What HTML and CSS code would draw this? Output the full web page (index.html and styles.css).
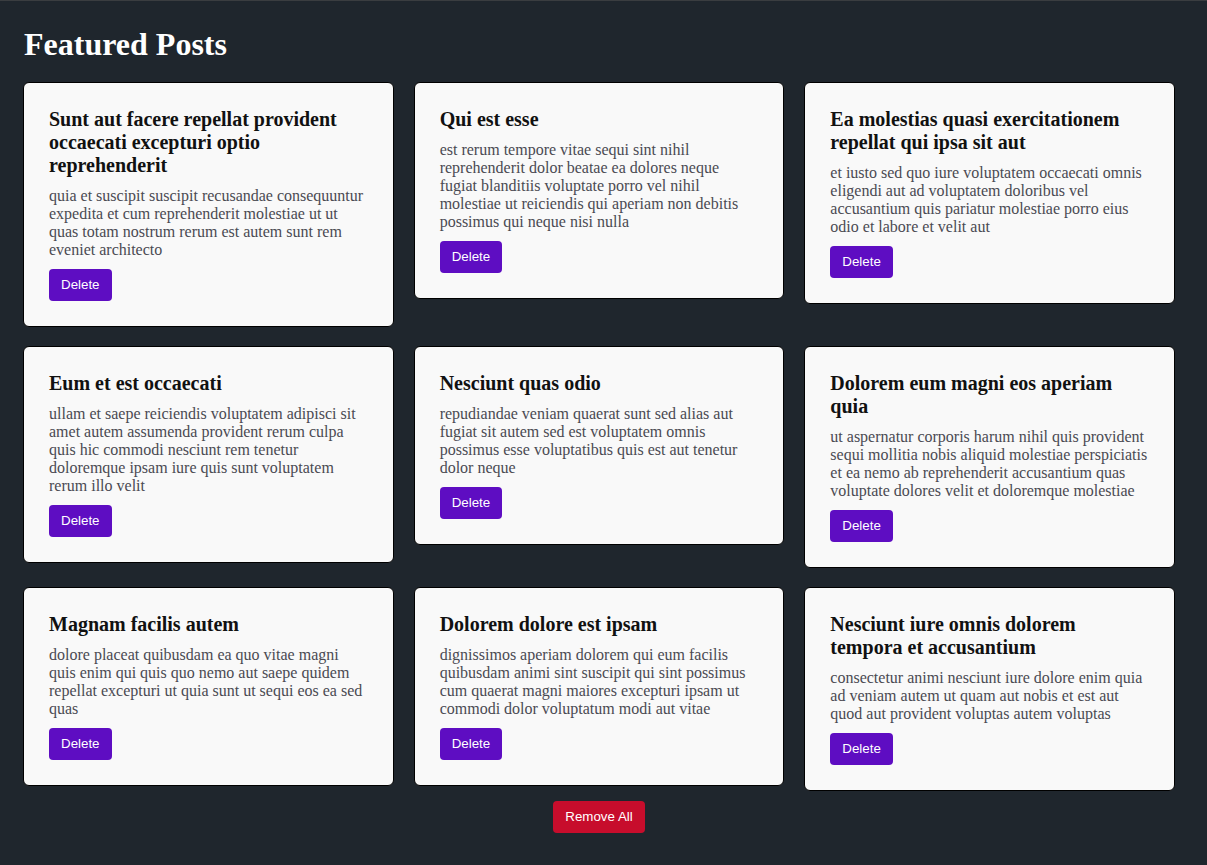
FILE: index.html
```html
<!DOCTYPE html>
<html lang="en">
<head>
<meta charset="utf-8">
<title>Featured Posts</title>
<link rel="stylesheet" href="styles.css">
</head>
<body>
<main class="page">
  <h1 class="page-title">Featured Posts</h1>
  <section class="grid">
    <article class="card">
      <h3 class="card-title">Sunt aut facere repellat provident occaecati excepturi optio reprehenderit</h3>
      <p class="card-body">quia et suscipit suscipit recusandae consequuntur expedita et cum reprehenderit molestiae ut ut quas totam nostrum rerum est autem sunt rem eveniet architecto</p>
      <button class="btn btn-delete">Delete</button>
    </article>
    <article class="card">
      <h3 class="card-title">Qui est esse</h3>
      <p class="card-body">est rerum tempore vitae sequi sint nihil reprehenderit dolor beatae ea dolores neque fugiat blanditiis voluptate porro vel nihil molestiae ut reiciendis qui aperiam non debitis possimus qui neque nisi nulla</p>
      <button class="btn btn-delete">Delete</button>
    </article>
    <article class="card">
      <h3 class="card-title">Ea molestias quasi exercitationem repellat qui ipsa sit aut</h3>
      <p class="card-body">et iusto sed quo iure voluptatem occaecati omnis eligendi aut ad voluptatem doloribus vel accusantium quis pariatur molestiae porro eius odio et labore et velit aut</p>
      <button class="btn btn-delete">Delete</button>
    </article>
    <article class="card">
      <h3 class="card-title">Eum et est occaecati</h3>
      <p class="card-body">ullam et saepe reiciendis voluptatem adipisci sit amet autem assumenda provident rerum culpa quis hic commodi nesciunt rem tenetur doloremque ipsam iure quis sunt voluptatem rerum illo velit</p>
      <button class="btn btn-delete">Delete</button>
    </article>
    <article class="card">
      <h3 class="card-title">Nesciunt quas odio</h3>
      <p class="card-body">repudiandae veniam quaerat sunt sed alias aut fugiat sit autem sed est voluptatem omnis possimus esse voluptatibus quis est aut tenetur dolor neque</p>
      <button class="btn btn-delete">Delete</button>
    </article>
    <article class="card">
      <h3 class="card-title">Dolorem eum magni eos aperiam quia</h3>
      <p class="card-body">ut aspernatur corporis harum nihil quis provident sequi mollitia nobis aliquid molestiae perspiciatis et ea nemo ab reprehenderit accusantium quas voluptate dolores velit et doloremque molestiae</p>
      <button class="btn btn-delete">Delete</button>
    </article>
    <article class="card">
      <h3 class="card-title">Magnam facilis autem</h3>
      <p class="card-body">dolore placeat quibusdam ea quo vitae magni quis enim qui quis quo nemo aut saepe quidem repellat excepturi ut quia sunt ut sequi eos ea sed quas</p>
      <button class="btn btn-delete">Delete</button>
    </article>
    <article class="card">
      <h3 class="card-title">Dolorem dolore est ipsam</h3>
      <p class="card-body">dignissimos aperiam dolorem qui eum facilis quibusdam animi sint suscipit qui sint possimus cum quaerat magni maiores excepturi ipsam ut commodi dolor voluptatum modi aut vitae</p>
      <button class="btn btn-delete">Delete</button>
    </article>
    <article class="card">
      <h3 class="card-title">Nesciunt iure omnis dolorem tempora et accusantium</h3>
      <p class="card-body">consectetur animi nesciunt iure dolore enim quia ad veniam autem ut quam aut nobis et est aut quod aut provident voluptas autem voluptas</p>
      <button class="btn btn-delete">Delete</button>
    </article>
  </section>
  <div class="actions">
    <button class="btn btn-remove">Remove All</button>
  </div>
</main>
</body>
</html>
```

FILE: styles.css
```css
html, body {
  margin: 0;
  padding: 0;
}

body {
  background: #1f262d;
  border-top: 1px solid #3a3d40;
  font-family: "Liberation Serif", "Times New Roman", serif;
  min-height: 864px;
  box-sizing: border-box;
}

.page {
  width: 1152px;
  padding: 25px 0 0 23px;
}

.page-title {
  margin: 0 0 19px 1px;
  font-size: 32px;
  font-weight: bold;
  color: #ffffff;
  line-height: 37px;
}

.grid {
  display: grid;
  grid-template-columns: repeat(3, 1fr);
  column-gap: 20px;
  row-gap: 19px;
  align-items: start;
}

.card {
  background: #f9f9f9;
  border: 1px solid #000;
  border-radius: 6px;
  padding: 25px 24px 25px 25px;
  display: flex;
  flex-direction: column;
  align-items: flex-start;
  gap: 10px;
}

.card-title {
  margin: 0;
  font-size: 20px;
  line-height: 23px;
  font-weight: bold;
  color: #111;
}

.card-body {
  margin: 0;
  font-size: 16px;
  line-height: 18px;
  color: #4a4a52;
}

.btn {
  font-family: "Liberation Sans", Arial, sans-serif;
  font-size: 13.33px;
  line-height: 16px;
  padding: 8px 12px;
  border: none;
  border-radius: 4px;
  color: #fff;
  cursor: pointer;
}

.btn-delete {
  background: #5e0dc2;
}

.btn-remove {
  background: #c70d2c;
}

.actions {
  display: flex;
  justify-content: center;
  padding-top: 10px;
}
```
